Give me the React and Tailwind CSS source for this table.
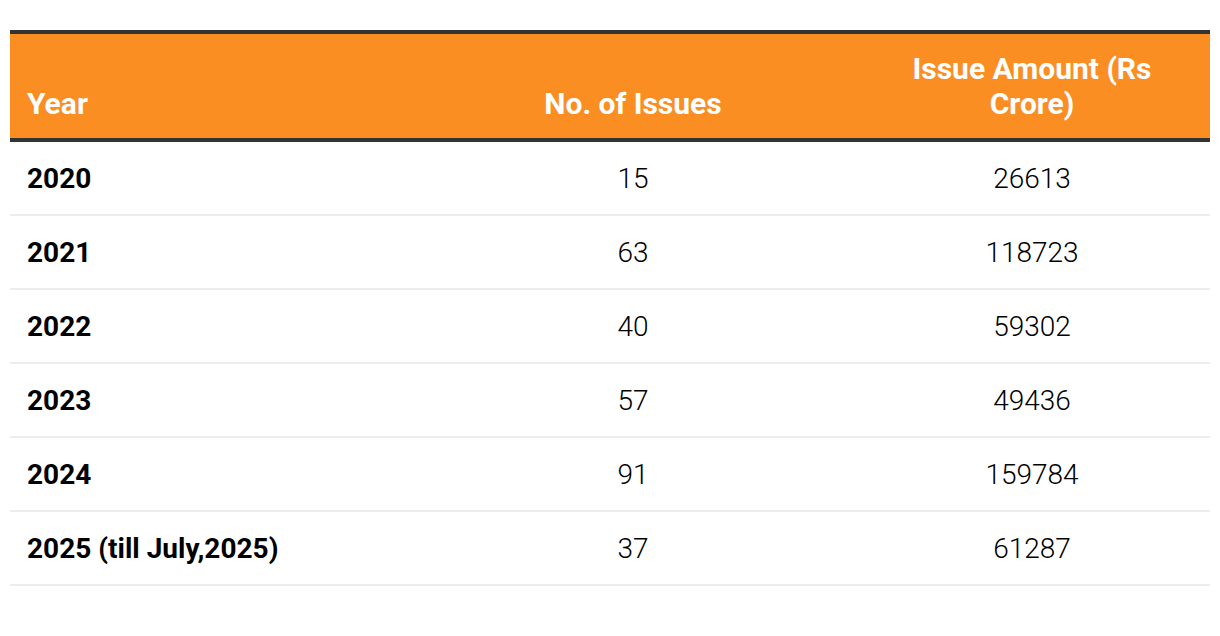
const rows = [
  ["2020", "15", "26613"],
  ["2021", "63", "118723"],
  ["2022", "40", "59302"],
  ["2023", "57", "49436"],
  ["2024", "91", "159784"],
  ["2025 (till July,2025)", "37", "61287"],
];

export default function App() {
  return (
    <div className="min-h-screen bg-white pt-[30px] px-[10px] font-['Roboto',sans-serif]">
      <div className="w-[1200px]">
        {/* header */}
        <div className="grid grid-cols-[402px_442px_356px] items-end bg-[#fb8e23] border-y-4 border-[#333] text-white font-bold text-[30px] leading-[35px]">
          <div className="px-[17px] py-[17px]">Year</div>
          <div className="px-[17px] py-[17px] text-center">No. of Issues</div>
          <div className="px-[17px] py-[17px] text-center">Issue Amount (Rs Crore)</div>
        </div>

        {/* body */}
        {rows.map(([year, count, amount]) => (
          <div
            key={year}
            className="grid grid-cols-[402px_442px_356px] items-center h-[74px] border-b-2 border-[#ececec] text-black text-[28px] leading-[35px]"
          >
            <div className="px-[17px] font-bold">{year}</div>
            <div className="px-[17px] text-center font-light">{count}</div>
            <div className="px-[17px] text-center font-light">{amount}</div>
          </div>
        ))}
      </div>
    </div>
  );
}
